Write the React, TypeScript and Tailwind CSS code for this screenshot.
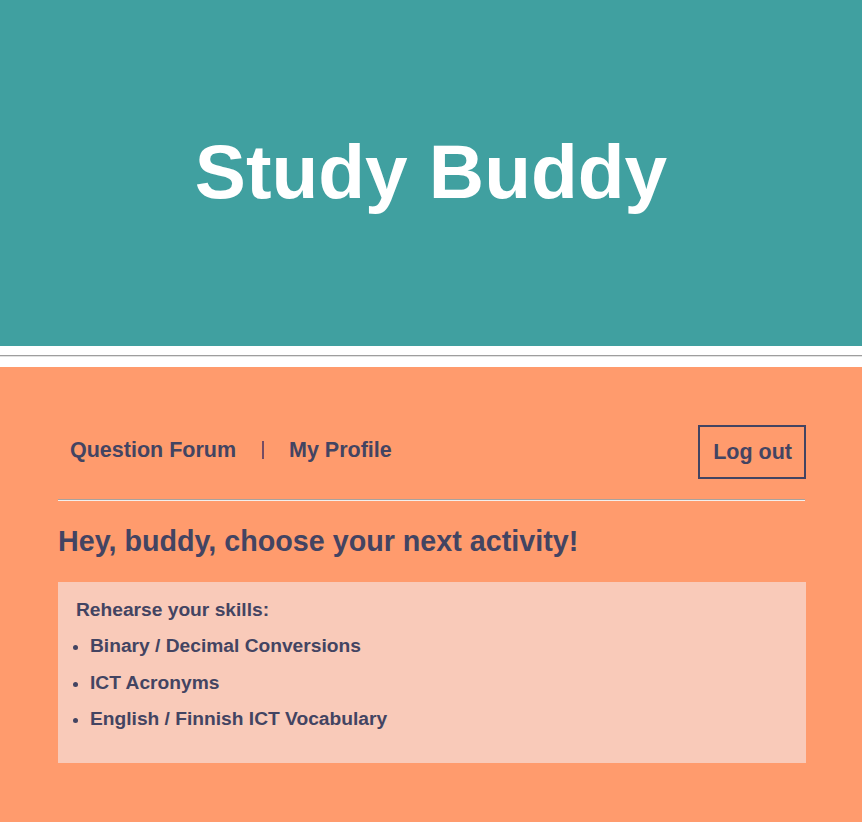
export default function App() {
  const items = [
    "Binary / Decimal Conversions",
    "ICT Acronyms",
    "English / Finnish ICT Vocabulary",
  ];
  return (
    <div className="min-h-[822px] bg-white font-['Liberation_Sans',Arial,sans-serif] text-[#434462]">
      <header className="h-[346px] bg-[#40a0a0] flex items-center justify-center">
        <h1 className="text-[76.6px] font-bold text-white leading-none pb-[2px]">Study Buddy</h1>
      </header>
      <div className="pt-[9px] pb-[10px]">
        <div className="h-0 border-t border-t-[#9e9e9e] border-b border-b-[#e2e2e2]" />
      </div>
      <main className="bg-[#ff9b6d] min-h-[455px] pl-[58px] pr-[56px] pt-[58px] pb-[40px]">
        <nav className="flex items-center justify-between">
          <div className="flex items-center pl-[12px] text-[21.5px] font-bold -mt-[4px]">
            <span>Question Forum</span>
            <span className="ml-[26px] mr-[25px] w-[2px] h-[18px] bg-[#754c63]" />
            <span>My Profile</span>
          </div>
          <button className="h-[54px] border-2 border-[#434462] pl-[13px] pr-[12px] text-[21.5px] font-bold flex items-center">
            Log out
          </button>
        </nav>
        <div className="mt-[20px] mr-[1px] h-0 border-t border-t-[#a8a29e] border-b border-b-[#f3efec]" />
        <h2 className="mt-[24px] text-[28.7px] font-bold leading-[33px]">
          Hey, buddy, choose your next activity!
        </h2>
        <section className="mt-[24px] bg-[#f9cab9] pl-[18px] pt-[17px] pb-[33px]">
          <div className="text-[19.2px] font-bold leading-[22px]">Rehearse your skills:</div>
          <ul className="mt-[14px] flex flex-col gap-[14.5px]">
            {items.map((t) => (
              <li key={t} className="flex items-center text-[19.2px] font-bold leading-[22px]">
                <span className="ml-[-3px] w-[5px] h-[5px] rounded-full bg-[#434462] mt-[3px]" />
                <span className="ml-[12px]">{t}</span>
              </li>
            ))}
          </ul>
        </section>
      </main>
    </div>
  );
}
